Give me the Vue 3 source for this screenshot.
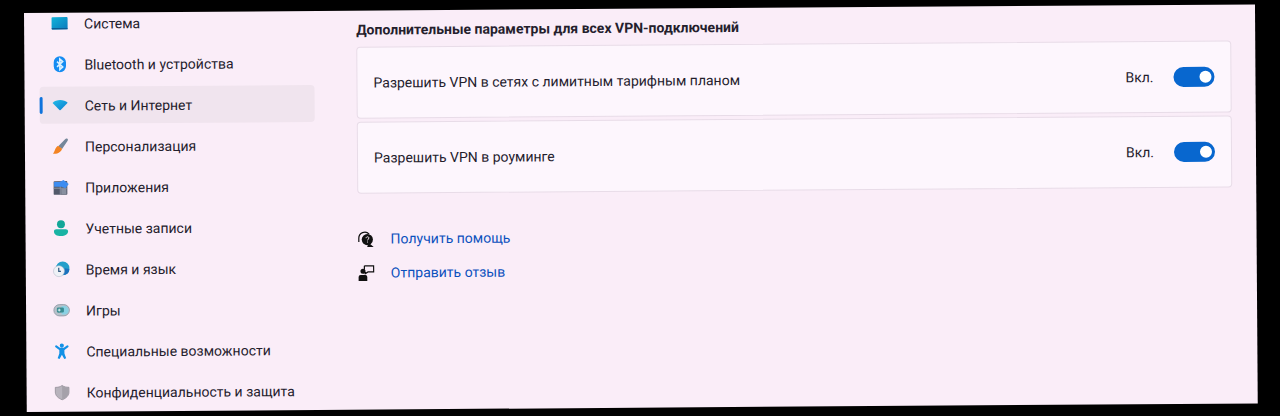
<script setup>
import { reactive } from 'vue'

const items = [
  { id: 'system', label: 'Система' },
  { id: 'bluetooth', label: 'Bluetooth и устройства' },
  { id: 'network', label: 'Сеть и Интернет', active: true },
  { id: 'personal', label: 'Персонализация' },
  { id: 'apps', label: 'Приложения' },
  { id: 'accounts', label: 'Учетные записи' },
  { id: 'time', label: 'Время и язык' },
  { id: 'games', label: 'Игры' },
  { id: 'access', label: 'Специальные возможности' },
  { id: 'privacy', label: 'Конфиденциальность и защита' },
]

const options = reactive([
  { id: 'metered', label: 'Разрешить VPN в сетях с лимитным тарифным планом', on: true },
  { id: 'roaming', label: 'Разрешить VPN в роуминге', on: true },
])
</script>

<template>
  <div class="window">
    <nav class="sidebar">
      <a v-for="item in items" :key="item.id" href="#" class="item" :class="{ active: item.active }">
        <svg class="icon" viewBox="0 0 18 18" aria-hidden="true">
          <template v-if="item.id === 'system'">
            <defs>
              <linearGradient id="g-system" x1="0" y1="0" x2="1" y2="1">
                <stop offset="0" stop-color="#12b4da" />
                <stop offset="1" stop-color="#0a7abc" />
              </linearGradient>
            </defs>
            <rect x="0.5" y="2.5" width="17" height="13" rx="1" fill="url(#g-system)" />
            <rect x="0.5" y="14" width="17" height="1.5" rx="0.7" fill="#0b5c93" />
          </template>
          <template v-else-if="item.id === 'bluetooth'">
            <rect x="2.500" y="0.5" width="13" height="17" rx="6.500" fill="#158cf2" />
            <path d="M6 6.200l6 5.600-3 2.700v-11l3 2.700-6 5.600" fill="none" stroke="#d9f0ff" stroke-width="1.700" />
          </template>
          <template v-else-if="item.id === 'network'">
            <defs>
              <linearGradient id="g-net" x1="0" y1="0" x2="1" y2="1">
                <stop offset="0" stop-color="#25bde8" />
                <stop offset="1" stop-color="#087cd0" />
              </linearGradient>
            </defs>
            <path d="M1 6.500C5 2.500 13 2.500 17 6.500L9.800 13.900Q9 14.600 8.200 13.900Z" fill="url(#g-net)" />
          </template>
          <template v-else-if="item.id === 'personal'">
            <path d="M16.500 1.200c.8.700.5 1.600 0 2.300l-5.800 8.400-4-2.900L14 1.500c.7-.7 1.700-.9 2.500-.3z" fill="#74879a" />
            <path d="M6.500 8.500l4.200 3.200C10 15.200 5.500 17.600 1 16.800c2-1.200 2.200-6.900 5.500-8.300z" fill="#f38423" />
          </template>
          <template v-else-if="item.id === 'apps'">
            <rect x="1.500" y="2.500" width="14.500" height="14.500" rx="1" fill="#52596a" />
            <path d="M1.500 10h14M8.500 3v14" stroke="#8c94a4" stroke-width="1" />
            <rect x="9.500" y="10" width="5.500" height="6.500" fill="#8890a0" />
            <path d="M2 3.500h6l4-2.200 5.500 4.200-3.500 4.500-4-1.500H2z" fill="#3d8cf0" />
          </template>
          <template v-else-if="item.id === 'accounts'">
            <circle cx="9" cy="4.700" r="4.200" fill="#12a698" />
            <path d="M4 10h10c1.400 0 2.500.900 2.500 2.300 0 3-3.200 5-7.500 5s-7.500-2-7.500-5C1.500 10.900 2.600 10 4 10z" fill="#19b3a4" />
          </template>
          <template v-else-if="item.id === 'time'">
            <circle cx="10.500" cy="8" r="7.300" fill="#239fca" />
            <path d="M11 15.200a7.300 7.300 0 0 0 6.700-6.500l-5-.7z" fill="#1971bd" />
            <circle cx="6.500" cy="11" r="5.800" fill="#eef1f6" stroke="#b2becb" stroke-width="0.600" />
            <path d="M6.300 7.500v3.700h2.300" fill="none" stroke="#355a82" stroke-width="1.300" />
          </template>
          <template v-else-if="item.id === 'games'">
            <rect x="0.800" y="3" width="16.500" height="12" rx="6" fill="#b7c2cb" stroke="#87939e" stroke-width="0.800" />
            <path d="M9 4.500h3a4.500 4.500 0 0 1 0 9H9z" fill="#8ad1e3" />
            <rect x="4" y="6" width="7.500" height="5.500" rx="1.500" fill="#398c92" />
            <path d="M5 8.800h3M6.500 7.300v3" stroke="#eff" stroke-width="0.900" />
          </template>
          <template v-else-if="item.id === 'access'">
            <circle cx="9" cy="3" r="2.200" fill="#1291e6" />
            <path d="M3 3.800L6.600 6.500h4.800L15 3.800" fill="none" stroke="#1291e6" stroke-width="2.300" stroke-linecap="round" stroke-linejoin="round" />
            <path d="M6.300 6h5.400v5.500l1.800 5-2 .8L9 12.800l-2.500 4.500-2-.8 1.800-5z" fill="#1291e6" />
          </template>
          <template v-else>
            <path d="M9 1.800c2 1.500 4.200 2 7.200 2v5c0 3.800-2.900 6.500-7.200 8.200-4.300-1.700-7.200-4.400-7.200-8.200v-5c3 0 5.200-.5 7.200-2z" fill="#b7b3bc" stroke="#8e8a93" stroke-width="0.800" />
            <path d="M9 2.200v14.300c4-1.600 6.800-4.100 6.800-7.700V4.200c-2.800 0-4.900-.5-6.800-2z" fill="#a5a1aa" />
          </template>
        </svg>
        <span>{{ item.label }}</span>
      </a>
    </nav>

    <main class="content">
      <h2>Дополнительные параметры для всех VPN-подключений</h2>
      <div class="cards">
        <div v-for="option in options" :key="option.id" class="card">
          <label :for="option.id">{{ option.label }}</label>
          <span class="state">{{ option.on ? 'Вкл.' : 'Откл.' }}</span>
          <input :id="option.id" v-model="option.on" type="checkbox" role="switch" class="switch" />
        </div>
      </div>
      <div class="links">
        <a href="#">
          <svg class="icon" viewBox="0 0 18 18" aria-hidden="true">
            <path d="M1.300 12V8a6.300 6.300 0 0 1 11-4.300" fill="none" stroke="#111" stroke-width="1.300" />
            <circle cx="10.300" cy="9.500" r="5.900" fill="#111" />
            <path d="M12 13l5 4.300h-7z" fill="#111" />
            <path d="M9 8c0-2 3-1.900 3-.1 0 1.200-1.500 1.200-1.500 2.500M10.500 11.600v1" fill="none" stroke="#fbeef8" stroke-width="1" />
          </svg>
          <span>Получить помощь</span>
        </a>
        <a href="#">
          <svg class="icon" viewBox="0 0 18 18" aria-hidden="true">
            <path d="M7 1.300h9.800v6.500h-6L8 9.500V7.800M7 1.300v4" fill="none" stroke="#111" stroke-width="1.300" />
            <circle cx="5.500" cy="7" r="2.700" fill="#111" />
            <path d="M3 11h5q2 0 2 2v4.300H.8V13q0-2 2.200-2z" fill="#111" />
          </svg>
          <span>Отправить отзыв</span>
        </a>
      </div>
    </main>
  </div>
</template>

<style>
body {
  background: #000;
  overflow: hidden;
}
</style>

<style scoped>
.window {
  box-sizing: border-box;
  display: flex;
  gap: 42px;
  margin: 13px 25px 4px 24px;
  height: calc(100vh - 17px);
  padding: 0 24px 0 15px;
  overflow: hidden;
  background: #faedf8;
  color: #24202c;
  font: 14px/20px Roboto, "Noto Sans", sans-serif;
  transform: rotate(-0.4deg);
  transform-origin: 0 0;
}

.sidebar {
  display: flex;
  flex: 0 0 275px;
  flex-direction: column;
  gap: 4px;
  margin-top: -8px;
}

.item {
  position: relative;
  display: flex;
  flex: none;
  align-items: center;
  gap: 16px;
  height: 37px;
  padding-left: 12px;
  border-radius: 4px;
  color: inherit;
  text-decoration: none;
  white-space: nowrap;
}

.item.active {
  background: #f0e4ee;
}

.item.active::before {
  position: absolute;
  top: 10px;
  left: 0;
  width: 3px;
  height: 17px;
  border-radius: 2px;
  background: #0e73dc;
  content: "";
}

.icon {
  flex: none;
  width: 17px;
  height: 17px;
}

.content {
  flex: 1;
  min-width: 0;
}

h2 {
  margin: 9px 0 7px;
  font-size: 14px;
  font-weight: 700;
  line-height: 20px;
}

.cards {
  display: grid;
  gap: 3px;
}

.card {
  box-sizing: border-box;
  display: flex;
  align-items: center;
  min-height: 72px;
  padding: 0 16px;
  border: 1px solid #e8dce8;
  border-radius: 4px;
  background: #fdf6fd;
}

.card label {
  flex: 1;
}

.switch {
  position: relative;
  width: 41px;
  height: 20px;
  margin: 0 0 0 20px;
  border-radius: 10px;
  appearance: none;
  background: #8b8490;
}

.switch:checked {
  background: #0867cf;
}

.switch::before {
  position: absolute;
  top: 4px;
  left: 4px;
  width: 12px;
  height: 12px;
  border-radius: 50%;
  background: #fff;
  content: "";
}

.switch:checked::before {
  left: 26px;
}

.links {
  display: grid;
  justify-items: start;
  gap: 14px;
  margin-top: 35px;
}

.links a {
  display: flex;
  align-items: center;
  gap: 16px;
  color: #0a50bd;
  text-decoration: none;
}
</style>
